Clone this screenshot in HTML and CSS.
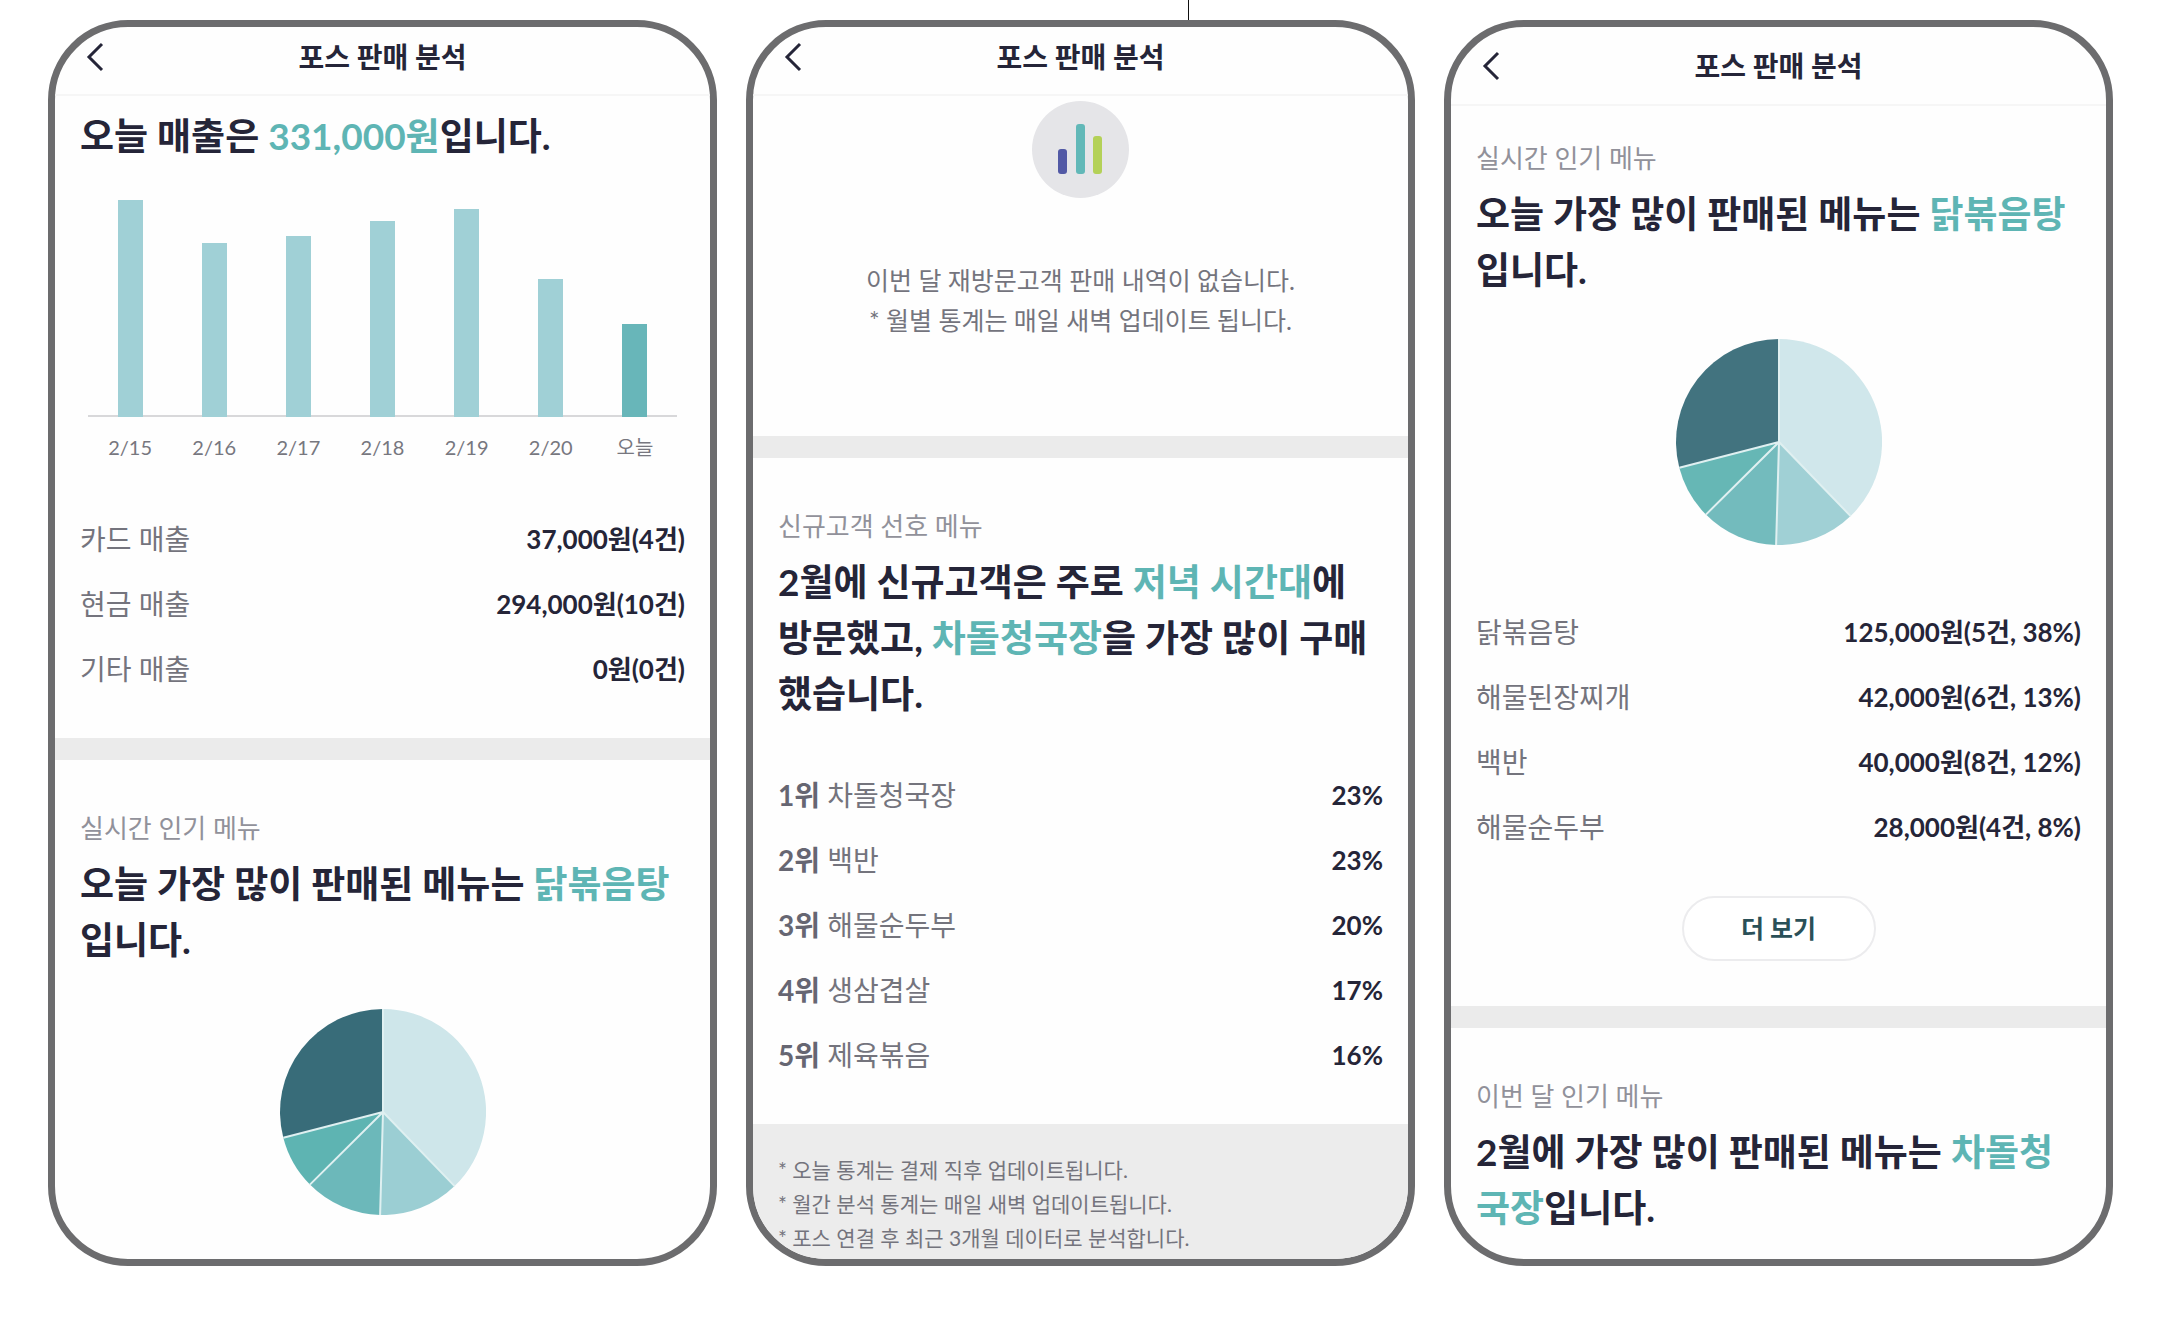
FILE: index.html
```html
<!DOCTYPE html>
<html lang="ko">
<head>
    <meta charset="UTF-8">
    <meta name="viewport" content="width=device-width, initial-scale=1.0">
    <title>포스 판매 분석</title>
    <link rel="stylesheet" href="styles.css">
</head>
<body>
<div class="connector"></div>
<main class="screens">

    <!-- 오늘 매출 -->
    <div class="phone">
        <header class="top-bar">
            <button type="button" class="back" aria-label="뒤로">
                <svg width="18" height="30" viewBox="0 0 18 30"><path d="M16 2 3 15l13 13"/></svg>
            </button>
            <h1>포스 판매 분석</h1>
        </header>
        <section class="section section-first">
            <h2>오늘 매출은 <em>331,000원</em>입니다.</h2>
            <div class="chart">
                <div class="bars">
                    <div class="bar" style="height: 217px"></div>
                    <div class="bar" style="height: 174px"></div>
                    <div class="bar" style="height: 181px"></div>
                    <div class="bar" style="height: 196px"></div>
                    <div class="bar" style="height: 208px"></div>
                    <div class="bar" style="height: 138px"></div>
                    <div class="bar today" style="height: 93px"></div>
                </div>
                <div class="days">
                    <span>2/15</span>
                    <span>2/16</span>
                    <span>2/17</span>
                    <span>2/18</span>
                    <span>2/19</span>
                    <span>2/20</span>
                    <span>오늘</span>
                </div>
            </div>
            <table class="rows">
                <tr><th scope="row">카드 매출</th><td>37,000원(4건)</td></tr>
                <tr><th scope="row">현금 매출</th><td>294,000원(10건)</td></tr>
                <tr><th scope="row">기타 매출</th><td>0원(0건)</td></tr>
            </table>
        </section>
        <section class="section">
            <p class="label">실시간 인기 메뉴</p>
            <h2>오늘 가장 많이 판매된 메뉴는 <em>닭볶음탕</em>입니다.</h2>
            <svg class="pie" viewBox="-103 -103 206 206">
                <path class="s1" d="M0 0V-103A103 103 0 0 1 71.6 74.1Z"/>
                <path class="s2" d="M0 0 71.6 74.1A103 103 0 0 1-2.9 103Z"/>
                <path class="s3" d="M0 0-2.9 103A103 103 0 0 1-73.1 72.6Z"/>
                <path class="s4" d="M0 0-73.1 72.6A103 103 0 0 1-99.7 25.8Z"/>
                <path class="s5" d="M0 0-99.7 25.8A103 103 0 0 1 0-103Z"/>
                <path class="cuts" d="M0-103V0L71.6 74.1M0 0-2.9 103M0 0-73.1 72.6M0 0-99.7 25.8"/>
            </svg>
        </section>
    </div>

    <!-- 신규고객 선호 메뉴 -->
    <div class="phone">
        <header class="top-bar">
            <button type="button" class="back" aria-label="뒤로">
                <svg width="18" height="30" viewBox="0 0 18 30"><path d="M16 2 3 15l13 13"/></svg>
            </button>
            <h1>포스 판매 분석</h1>
        </header>
        <section class="empty">
            <svg class="empty-icon" viewBox="0 0 97 97">
                <circle cx="48.5" cy="48.5" r="48.5" fill="#e5e5e8"/>
                <rect x="26" y="48" width="9" height="25" rx="3" fill="#5259a5"/>
                <rect x="44" y="23" width="9" height="50" rx="3" fill="#62b8b8"/>
                <rect x="61" y="35" width="9" height="38" rx="3" fill="#b4d158"/>
            </svg>
            <p>이번 달 재방문고객 판매 내역이 없습니다.<br>* 월별 통계는 매일 새벽 업데이트 됩니다.</p>
        </section>
        <section class="section">
            <p class="label">신규고객 선호 메뉴</p>
            <h2>2월에 신규고객은 주로 <em>저녁 시간대</em>에 방문했고, <em>차돌청국장</em>을 가장 많이 구매했습니다.</h2>
            <table class="rows rank">
                <tr><th scope="row"><b>1위</b> 차돌청국장</th><td>23%</td></tr>
                <tr><th scope="row"><b>2위</b> 백반</th><td>23%</td></tr>
                <tr><th scope="row"><b>3위</b> 해물순두부</th><td>20%</td></tr>
                <tr><th scope="row"><b>4위</b> 생삼겹살</th><td>17%</td></tr>
                <tr><th scope="row"><b>5위</b> 제육볶음</th><td>16%</td></tr>
            </table>
        </section>
        <footer class="notes">
            <p>* 오늘 통계는 결제 직후 업데이트됩니다.</p>
            <p>* 월간 분석 통계는 매일 새벽 업데이트됩니다.</p>
            <p>* 포스 연결 후 최근 3개월 데이터로 분석합니다.</p>
        </footer>
    </div>

    <!-- 인기 메뉴 -->
    <div class="phone">
        <header class="top-bar top-bar-tall">
            <button type="button" class="back" aria-label="뒤로">
                <svg width="18" height="30" viewBox="0 0 18 30"><path d="M16 2 3 15l13 13"/></svg>
            </button>
            <h1>포스 판매 분석</h1>
        </header>
        <section class="section section-menu">
            <p class="label">실시간 인기 메뉴</p>
            <h2>오늘 가장 많이 판매된 메뉴는 <em>닭볶음탕</em>입니다.</h2>
            <svg class="pie pie-soft" viewBox="-103 -103 206 206">
                <path class="s1" d="M0 0V-103A103 103 0 0 1 71.6 74.1Z"/>
                <path class="s2" d="M0 0 71.6 74.1A103 103 0 0 1-2.9 103Z"/>
                <path class="s3" d="M0 0-2.9 103A103 103 0 0 1-73.1 72.6Z"/>
                <path class="s4" d="M0 0-73.1 72.6A103 103 0 0 1-99.7 25.8Z"/>
                <path class="s5" d="M0 0-99.7 25.8A103 103 0 0 1 0-103Z"/>
                <path class="cuts" d="M0-103V0L71.6 74.1M0 0-2.9 103M0 0-73.1 72.6M0 0-99.7 25.8"/>
            </svg>
            <table class="rows">
                <tr><th scope="row">닭볶음탕</th><td>125,000원(5건, 38%)</td></tr>
                <tr><th scope="row">해물된장찌개</th><td>42,000원(6건, 13%)</td></tr>
                <tr><th scope="row">백반</th><td>40,000원(8건, 12%)</td></tr>
                <tr><th scope="row">해물순두부</th><td>28,000원(4건, 8%)</td></tr>
            </table>
            <button type="button" class="more">더 보기</button>
        </section>
        <section class="section">
            <p class="label">이번 달 인기 메뉴</p>
            <h2>2월에 가장 많이 판매된 메뉴는 <em>차돌청국장</em>입니다.</h2>
        </section>
    </div>

</main>
</body>
</html>
```
FILE: styles.css
```css
* {
    box-sizing: border-box;
}

body {
    margin: 0;
    min-height: 100vh;
    display: flex;
    flex-direction: column;
    background: #fff;
    color: #252538;
    font-family: Lato, "Noto Sans CJK KR", sans-serif;
}

h1, h2, p {
    margin: 0;
}

.connector {
    width: 1px;
    height: 20px;
    margin-left: calc(55% + 2px);
    background: #111;
}

.screens {
    flex: 1;
    display: grid;
    grid-template-columns: repeat(3, 1fr);
    gap: 29px;
    padding: 0 44px 59px 48px;
}

.phone {
    display: flex;
    flex-direction: column;
    border: 7px solid #6c6c6e;
    border-radius: 80px;
    background: #fefefe;
    overflow: hidden;
}

/* header */
.top-bar {
    display: grid;
    grid-template-columns: 18px 1fr 18px;
    align-items: center;
    height: 69px;
    padding: 0 31px 8px;
    border-bottom: 2px solid #f6f6f6;
}

.top-bar-tall {
    height: 79px;
    padding-bottom: 0;
}

.top-bar h1 {
    font-size: 28px;
    line-height: 40px;
    text-align: center;
}

.back {
    display: flex;
    padding: 0;
    border: 0;
    background: none;
    cursor: pointer;
}

.back path {
    fill: none;
    stroke: #252538;
    stroke-width: 3;
}

/* sections */
.section {
    padding: 48px 25px 35px;
}

.section + .section,
.empty + .section {
    border-top: 22px solid #ebebeb;
}

.section-first {
    padding-top: 12px;
}

.section-menu {
    padding: 32px 25px 45px;
}

.section:last-child {
    padding-bottom: 0;
}

.label {
    margin-bottom: 8px;
    color: #91919a;
    font-size: 26px;
    line-height: 40px;
}

h2 {
    font-size: 37px;
    line-height: 56px;
}

h2 em {
    color: #5eb5b4;
    font-style: normal;
}

/* bar chart */
.chart {
    margin: 36px 8px 46px;
}

.bars, .days {
    display: grid;
    grid-template-columns: repeat(7, 1fr);
    justify-items: center;
}

.bars {
    align-items: end;
    height: 217px;
    background: linear-gradient(#d8d8da, #d8d8da) bottom / 100% 2px no-repeat;
}

.bar {
    width: 25px;
    background: #a0d0d6;
}

.bar.today {
    background: #68b6b9;
}

.days {
    margin-top: 15px;
    color: #77777f;
    font-size: 20px;
    line-height: 30px;
}

/* label / value rows */
.rows {
    width: 100%;
    border-collapse: collapse;
    font-size: 28px;
    line-height: 40px;
}

.rows th, .rows td {
    height: 65px;
    padding: 0 0 4px;
}

.rows th {
    color: #74747d;
    font-weight: 400;
    text-align: left;
}

.rows th b {
    color: #666672;
}

.rows td {
    font-size: 26px;
    font-weight: 700;
    text-align: right;
}

.rank {
    margin-top: 42px;
}

/* pie chart */
.pie {
    display: block;
    width: 206px;
    height: 206px;
    margin: 41px auto 0;
}

.pie + .rows {
    margin-top: 56px;
}

.pie-soft {
    opacity: .95;
}

.s1 { fill: #cee6ea; }
.s2 { fill: #9bced3; }
.s3 { fill: #6cb8ba; }
.s4 { fill: #5eb4b2; }
.s5 { fill: #386c79; }

.cuts {
    fill: none;
    stroke: #dff0f1;
    stroke-width: 2;
}

.more {
    display: block;
    width: 194px;
    height: 65px;
    margin: 35px auto 0;
    padding: 0 0 3px;
    border: 2px solid #ececee;
    border-radius: 33px;
    background: #fff;
    color: #2a5058;
    font-family: inherit;
    font-size: 25px;
    font-weight: 700;
    cursor: pointer;
}

/* empty state */
.empty {
    padding: 5px 25px 96px;
    color: #74747d;
    font-size: 25px;
    line-height: 40px;
    text-align: center;
}

.empty-icon {
    display: block;
    width: 97px;
    height: 97px;
    margin: 0 auto 62px;
}

.notes {
    flex: 1;
    padding: 29px 25px 0;
    background: #ececec;
    color: #74747d;
    font-size: 21px;
    line-height: 34px;
}
```
